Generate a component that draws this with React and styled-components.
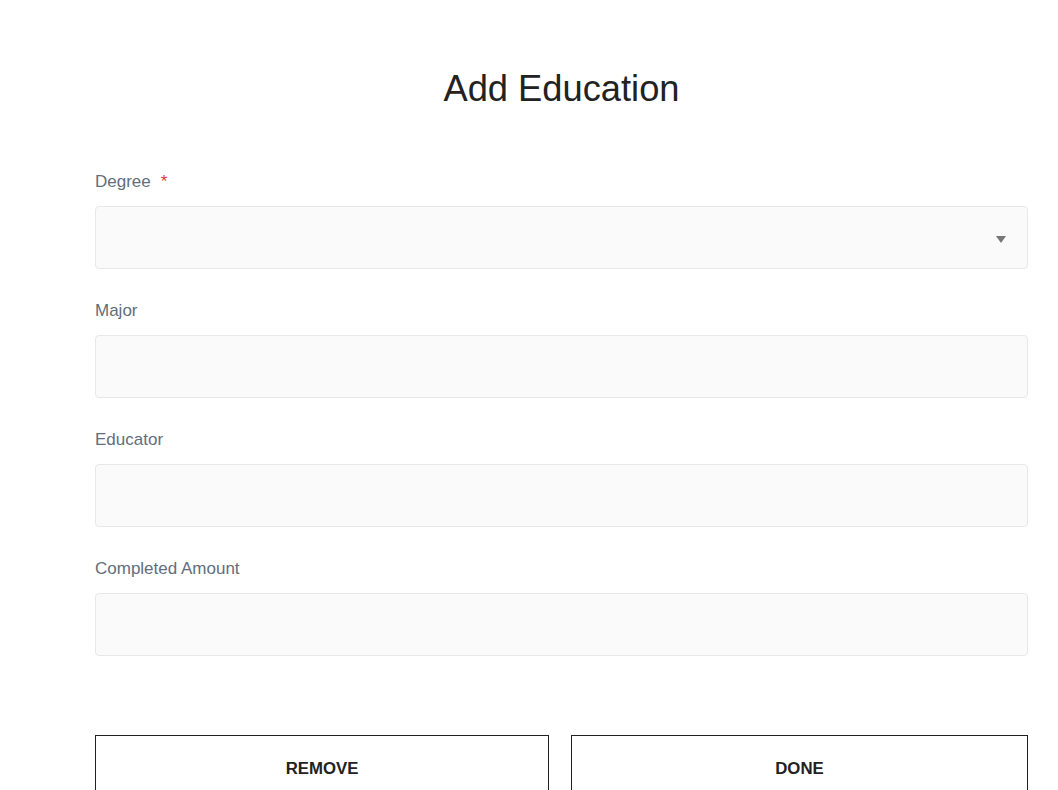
import React, { useState } from 'react';
import styled, { createGlobalStyle } from 'styled-components';

const GlobalStyle = createGlobalStyle`
  html, body {
    margin: 0;
    padding: 0;
    background: #ffffff;
  }
  body {
    font-family: "Liberation Sans", Arial, sans-serif;
  }
  * {
    box-sizing: border-box;
  }
`;

const Page = styled.div`
  padding: 0 30px 0 95px;
  display: flex;
  flex-direction: column;
`;

const Title = styled.h1`
  margin: 67px 0 61px;
  font-size: 36.3px;
  font-weight: 400;
  line-height: 43px;
  color: #222222;
  text-align: center;
`;

const Form = styled.form`
  display: flex;
  flex-direction: column;
`;

const Field = styled.div`
  display: flex;
  flex-direction: column;
  margin-bottom: 31px;
`;

const Label = styled.label`
  font-size: 17px;
  line-height: 20px;
  padding-top: 1px;
  color: #5f6e7d;
  margin-bottom: 14px;
`;

const Required = styled.span`
  color: #e53935;
  margin-left: 10px;
`;

const Input = styled.input`
  height: 63px;
  width: 100%;
  padding: 0 16px;
  border: 1px solid #e8e8e8;
  border-radius: 4px;
  background: #fafafa;
  font-family: inherit;
  font-size: 16px;
  color: #222;
  outline: none;
`;

const SelectWrap = styled.div`
  position: relative;
`;

const Select = styled.select`
  height: 63px;
  width: 100%;
  padding: 0 16px;
  border: 1px solid #e8e8e8;
  border-radius: 4px;
  background: #fafafa;
  font-family: inherit;
  font-size: 16px;
  color: #222;
  appearance: none;
  outline: none;
`;

const Caret = styled.span`
  position: absolute;
  right: 22px;
  top: 30px;
  width: 0;
  height: 0;
  border-left: 5px solid transparent;
  border-right: 5px solid transparent;
  border-top: 7px solid #777777;
  pointer-events: none;
`;

const Actions = styled.div`
  display: grid;
  grid-template-columns: 454px 1fr;
  gap: 22px;
  margin-top: 48px;
`;

const Button = styled.button`
  height: 66px;
  padding: 2px 0 0;
  background: #ffffff;
  border: 1px solid #222222;
  border-radius: 0;
  font-family: inherit;
  font-size: 16.8px;
  font-weight: 700;
  color: #222222;
  text-transform: uppercase;
  cursor: pointer;
`;

const fields = [
  { name: 'major', label: 'Major' },
  { name: 'educator', label: 'Educator' },
  { name: 'completed', label: 'Completed Amount' },
];

export default function App() {
  const [values, setValues] = useState({ degree: '', major: '', educator: '', completed: '' });

  const handleChange = (e) => {
    setValues({ ...values, [e.target.name]: e.target.value });
  };

  return (
    <Page>
      <GlobalStyle />
      <Title>Add Education</Title>
      <Form onSubmit={(e) => e.preventDefault()}>
        <Field>
          <Label htmlFor="degree">
            Degree<Required>*</Required>
          </Label>
          <SelectWrap>
            <Select id="degree" name="degree" value={values.degree} onChange={handleChange}>
              <option value=""></option>
              <option value="bachelor">Bachelor</option>
              <option value="master">Master</option>
              <option value="phd">PhD</option>
            </Select>
            <Caret />
          </SelectWrap>
        </Field>
        {fields.map((f) => (
          <Field key={f.name}>
            <Label htmlFor={f.name}>{f.label}</Label>
            <Input id={f.name} name={f.name} value={values[f.name]} onChange={handleChange} />
          </Field>
        ))}
        <Actions>
          <Button type="button">Remove</Button>
          <Button type="submit">Done</Button>
        </Actions>
      </Form>
    </Page>
  );
}
